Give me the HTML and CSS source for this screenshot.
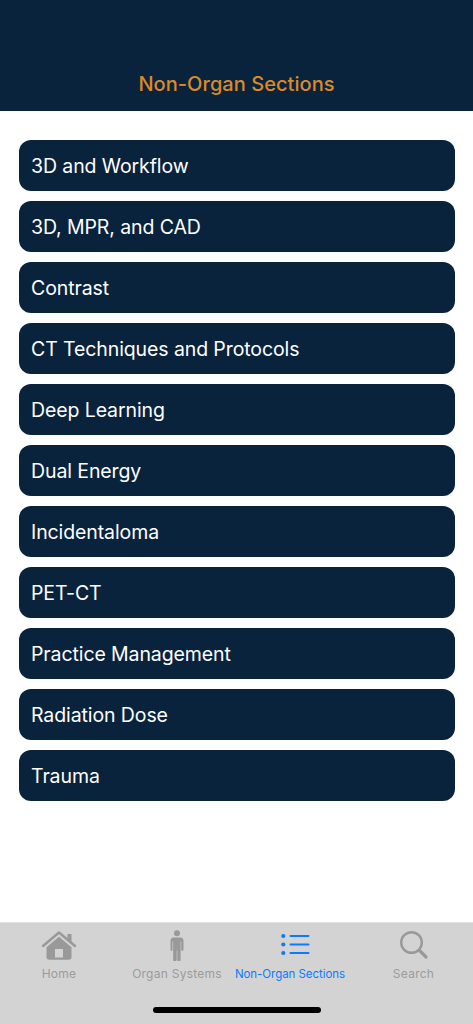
FILE: index.html
```html
<!DOCTYPE html>
<html lang="en">
<head>
<meta charset="utf-8">
<title>Non-Organ Sections</title>
<link rel="stylesheet" href="styles.css">
</head>
<body>
<div class="app">
  <header class="header"><h1 class="title">Non-Organ Sections</h1></header>
  <main class="list">
    <a class="row">3D and Workflow</a>
    <a class="row">3D, MPR, and CAD</a>
    <a class="row">Contrast</a>
    <a class="row">CT Techniques and Protocols</a>
    <a class="row">Deep Learning</a>
    <a class="row">Dual Energy</a>
    <a class="row">Incidentaloma</a>
    <a class="row">PET-CT</a>
    <a class="row">Practice Management</a>
    <a class="row">Radiation Dose</a>
    <a class="row">Trauma</a>
  </main>
  <nav class="tabbar">
    <div class="tabs">
      <div class="tab tab-home">
        <svg class="icon" width="36" height="32" viewBox="0 0 36 32"><path class="fill" d="M26.500 4h4v8l-4-3.400z"/><path class="line" d="M2 16 18 2.500 34 16" fill="none" stroke-width="2.400" stroke-linecap="round" stroke-linejoin="round"/><path class="fill" fill-rule="evenodd" d="M18 6.800 30.500 17.200V27c0 1.700-1 2.800-2.800 2.800H8.300C6.500 29.800 5.500 28.700 5.500 27V17.200zM14 19v8.500h8V19z"/></svg>
        <span class="label">Home</span>
      </div>
      <div class="tab tab-organ">
        <svg class="icon" width="16" height="32" viewBox="0 0 16 32"><circle class="fill" cx="8" cy="3.200" r="3"/><path class="fill" d="M4.500 7.500h7C13.500 7.500 14.500 8.900 14.500 11V19.500c0 .9-.4 1.400-1.200 1.400s-1.100-.5-1.100-1.400v-8h-.6V30c0 .6-.4 1-1 1H9.200c-.6 0-.9-.4-.9-1V20.500h-.6V30c0 .6-.3 1-.9 1H5.100c-.6 0-1-.4-1-1V11.500h-.6v8c0 .9-.3 1.400-1.100 1.400S1.500 20.400 1.500 19.500V11C1.500 8.900 2.500 7.500 4.500 7.500z"/></svg>
        <span class="label">Organ Systems</span>
      </div>
      <div class="tab tab-sections tab-active">
        <svg class="icon icon-sections" width="30" height="32" viewBox="0 0 30 32"><g class="fill-active"><circle cx="2.300" cy="6" r="2.100"/><circle cx="2.300" cy="14.500" r="2.100"/><circle cx="2.300" cy="23" r="2.100"/><rect x="8.500" y="4.900" width="20" height="2.200" rx="1"/><rect x="8.500" y="13.400" width="20" height="2.200" rx="1"/><rect x="8.500" y="21.900" width="20" height="2.200" rx="1"/></g></svg>
        <span class="label">Non-Organ Sections</span>
      </div>
      <div class="tab tab-search">
        <svg class="icon" width="30" height="32" viewBox="0 0 30 32"><circle class="line" cx="12.500" cy="12.500" r="10.300" fill="none" stroke-width="2.400"/><path class="line" d="M20.500 20.500 27 27" fill="none" stroke-width="3.200" stroke-linecap="round"/></svg>
        <span class="label">Search</span>
      </div>
    </div>
    <div class="home-bar"></div>
  </nav>
</div>
</body>
</html>
```
FILE: styles.css
```css
* { box-sizing: border-box; }
html, body { margin: 0; padding: 0; }
body { background: #fff; font-family: Inter, "Liberation Sans", sans-serif; }
.app { width: 473px; height: 1024px; display: flex; flex-direction: column; overflow: hidden; }
.header { height: 110.500px; background: #0a233d; display: flex; align-items: flex-end; justify-content: center; padding-bottom: 15px; flex: none; }
.title { margin: 0; font-size: 20px; line-height: 24px; font-weight: 500; color: #db8a26; letter-spacing: 0.05px; }
.list { flex: 1; display: flex; flex-direction: column; gap: 10px; padding: 29.500px 18.500px 0 18.500px; }
.row { display: flex; align-items: center; height: 51px; padding-left: 12.500px; background: #0a233d; border-radius: 12px; color: #fff; font-size: 19.500px; letter-spacing: -0.1px; }
.tabbar { height: 102px; flex: none; background: #d3d3d3; border-top: 1px solid #e2e2e2; display: flex; flex-direction: column; }
.tabs { display: flex; height: 84px; }
.tab { display: flex; flex-direction: column; align-items: center; padding-top: 7px; flex: none; }
.tab-home { width: 118px; }
.tab-organ { width: 118px; }
.tab-sections { width: 108px; }
.tab-search { width: 129px; padding-left: 10px; }
.icon { display: block; height: 32px; flex: none; }
.icon-sections { margin-left: 12px; }
.fill { fill: #999; }
.line { stroke: #999; }
.fill-active { fill: #0a7aff; }
.label { margin-top: 5px; font-size: 12px; letter-spacing: .25px; line-height: 14px; font-weight: 400; color: #9b9b9b; white-space: nowrap; }
.tab-active .label { font-size: 11.500px; color: #0a7aff; letter-spacing: -0.05px; }
.home-bar { width: 168px; height: 6px; border-radius: 3px; background: #000; margin: 0 auto; }
```
